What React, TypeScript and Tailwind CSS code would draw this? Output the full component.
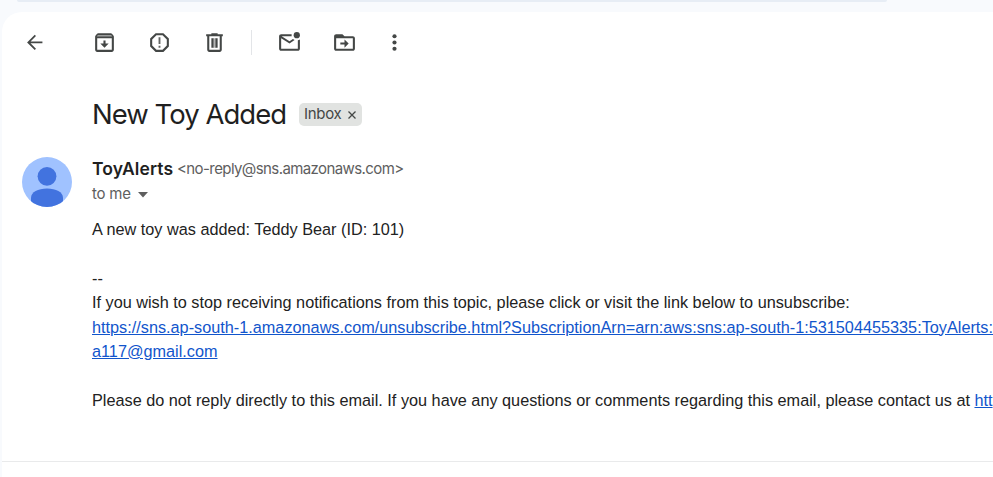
import type { ReactNode } from "react";

function Icon({ children, className = "" }: { children: ReactNode; className?: string }) {
  return (
    <svg viewBox="0 0 24 24" className={`h-[25px] w-[25px] shrink-0 ${className}`} fill="#444746">
      {children}
    </svg>
  );
}

function Toolbar() {
  return (
    <div className="flex h-[61px] items-center pl-5">
      <Icon>
        <path transform="translate(1.2 .9) scale(.92)" d="M20 11.1H7.6l5.7-5.7L12 4l-8 8 8 8 1.3-1.4-5.7-5.7H20z" />
      </Icon>
      <Icon className="ml-[45px]">
        <path d="M20.54 5.23l-1.39-1.68C18.88 3.21 18.47 3 18 3H6c-.47 0-.88.21-1.16.55L3.46 5.23C3.17 5.57 3 6.02 3 6.5V19c0 1.1.9 2 2 2h14c1.1 0 2-.9 2-2V6.5c0-.48-.17-.93-.46-1.27zM19 19H5V8h14v11zM13 10h-2v3H8l4 4 4-4h-3z" />
        <path d="M5.6 4.8h12.8l1 1.4H4.6z" fill="#9c9e9d" />
      </Icon>
      <Icon className="ml-[30px]">
        <path d="M15.73 3H8.27L3 8.27v7.46L8.27 21h7.46L21 15.73V8.27L15.73 3zM19 14.9L14.9 19H9.1L5 14.9V9.1L9.1 5h5.8L19 9.1v5.8z" />
        <path d="M11.1 7h1.8v6.5h-1.8zM11.1 15h1.8v2h-1.8z" fill="#626463" />
      </Icon>
      <Icon className="ml-[30px]">
        <path d="M15 4V3H9v1H4v2h1v13c0 1.1.9 2 2 2h10c1.1 0 2-.9 2-2V6h1V4h-5zm2 15H7V6h10v13z" />
        <path d="M9 8h2.3v9H9zM12.7 8H15v9h-2.3z" />
        <path d="M11.3 8h1.4v9h-1.4z" fill="#b4b5b5" />
      </Icon>
      <div className="ml-6 h-[25px] w-px bg-[#e3e5e8]" />
      <Icon className="ml-[25px]">
        <path d="M22 9.2V18c0 1.1-.9 2-2 2H4c-1.1 0-2-.9-2-2V6c0-1.1.9-2 2-2h10.1a5 5 0 0 0 0 2H4.5l7.5 4.7 3.3-2c.5.4 1 .8 1.6 1L12 13 4 8v10h16V9.9c.7-.1 1.4-.4 2-.7z" />
        <circle cx="19" cy="5" r="3" />
      </Icon>
      <Icon className="ml-[30px]">
        <path d="M20 6h-8l-2-2H4c-1.1 0-2 .9-2 2v12c0 1.1.9 2 2 2h16c1.1 0 2-.9 2-2V8c0-1.1-.9-2-2-2zm0 12H4V8h16v10zM12 17l4-4-4-4v3H8v2h4z" />
      </Icon>
      <Icon className="ml-[25px]">
        <circle cx="12" cy="6" r="2" />
        <circle cx="12" cy="12" r="2" />
        <circle cx="12" cy="18" r="2" />
      </Icon>
    </div>
  );
}

function Avatar() {
  return (
    <svg viewBox="0 0 50 50" className="mt-px h-[50px] w-[50px] shrink-0">
      <defs>
        <clipPath id="avatar-circle">
          <circle cx="25" cy="25" r="25" />
        </clipPath>
      </defs>
      <g clipPath="url(#avatar-circle)">
        <rect width="50" height="50" fill="#a0c2ff" />
        <circle cx="25" cy="19.3" r="9.4" fill="#4273df" />
        <path d="M9 50V41c0-6 7-9.4 16-9.4S41 35 41 41v9z" fill="#4273df" />
      </g>
    </svg>
  );
}

export default function App() {
  return (
    <div className="h-[477px] w-[993px] overflow-hidden bg-[#f8fafd] font-['Inter',sans-serif]">
      <div className="h-3 pl-[17px]">
        <div className="h-0.5 w-[870px] rounded-b-[20px] bg-[#e7edf5]" />
      </div>
      <main className="ml-0.5 h-[465px] rounded-tl-[20px] bg-white">
        <Toolbar />
        <div className="flex h-[83px] items-center pl-[90px]">
          <h1 className="-mt-0.5 w-[207px] whitespace-nowrap text-[27.5px] leading-9 tracking-[-0.97px] text-[#1f1f1f]">New Toy Added</h1>
          <div className="flex h-[23px] w-[63px] items-center rounded-[5px] bg-[#e1e3e1] pl-[5px] text-[15px] leading-[23px] tracking-[-0.3px] text-[#444746]">
            <span className="w-[44px] pb-0.5">Inbox</span>
            <svg viewBox="0 0 8 8" className="mt-px h-2 w-2" stroke="#444746" strokeWidth="1.3">
              <path d="M.5.5l7 7M7.5.5l-7 7" />
            </svg>
          </div>
        </div>
        <div className="flex h-[61px] pl-5">
          <Avatar />
          <div className="ml-5 whitespace-nowrap text-[15px] leading-[25px] text-[#5e5e5e]">
            <div className="flex h-[25px]">
              <span className="w-[85px] text-[17.5px] font-semibold tracking-[0.1px] text-[#1f1f1f]">ToyAlerts</span>
              <span className="tracking-[-0.59px]">&lt;no-reply@sns.amazonaws.com&gt;</span>
            </div>
            <div className="flex h-[25px] items-center">
              <span className="w-[46px] tracking-[-0.2px]">to me</span>
              <svg viewBox="0 0 10 6" className="mt-0.5 h-1.5 w-2.5" fill="#5e5e5e">
                <path d="M0 0h10L5 5.5z" />
              </svg>
            </div>
          </div>
        </div>
        <div className="h-[232px] overflow-hidden whitespace-nowrap pl-[90px] font-['Liberation_Sans',Arial,sans-serif] text-[16.25px] leading-[24.375px] text-[#222222]">
          <div>A new toy was added: Teddy Bear (ID: 101)</div>
          <br />
          <div>--</div>
          <div>If you wish to stop receiving notifications from this topic, please click or visit the link below to unsubscribe:</div>
          <div className="text-[#1155cc] underline">https://sns.ap-south-1.amazonaws.com/unsubscribe.html?SubscriptionArn=arn:aws:sns:ap-south-1:531504455335:ToyAlerts:</div>
          <div className="text-[#1155cc] underline">a117@gmail.com</div>
          <br />
          <div>
            Please do not reply directly to this email. If you have any questions or comments regarding this email, please contact us at{" "}
            <span className="text-[#1155cc] underline">htt</span>
          </div>
        </div>
        <div className="mt-3 h-px bg-[#e9eaeb]" />
      </main>
    </div>
  );
}
